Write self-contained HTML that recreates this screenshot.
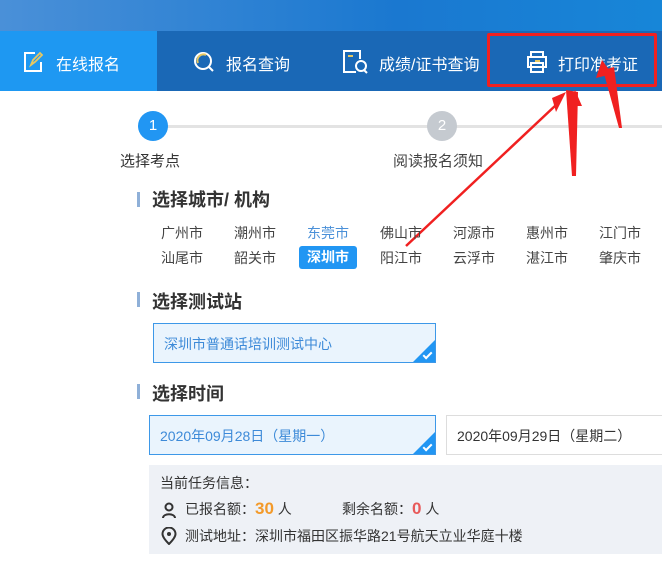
<!DOCTYPE html><html><head><meta charset="utf-8"><style>
*{margin:0;padding:0;box-sizing:border-box}
body{width:662px;height:568px;overflow:hidden;background:#fff;font-family:"Liberation Sans","Noto Sans CJK SC",sans-serif;position:relative;color:#333}
.a{position:absolute;white-space:nowrap}
.h{font-size:18px;font-weight:bold;color:#333}
.bar{position:absolute;width:3px;height:15px;background:#8fb0d8;left:137px}
.c{font-size:14px;color:#444}
.chk{position:absolute;right:0;bottom:0;width:0;height:0;border-left:22px solid transparent;border-bottom:22px solid #2196f3}
</style></head><body>
<div class="a" style="left:0;top:0;width:662px;height:31px;background:linear-gradient(90deg,#4a90d8,#1a78d0 60%,#1786d8)"></div>
<div class="a" style="left:0;top:31px;width:662px;height:60px;background:#1a68b6"></div>
<div class="a" style="left:0;top:31px;width:157px;height:60px;background:#1e98f2"></div>
<svg class="a" style="left:22px;top:50px" width="24" height="24" viewBox="0 0 24 24"><path d="M13 3H3v18h16v-9" fill="none" stroke="#fff" stroke-width="2"/><path d="M9 15l2-5 7-7 2 2-7 7z" fill="none" stroke="#e8c860" stroke-width="1.8"/></svg>
<div class="a" style="left:56px;top:51px;font-size:16px;color:#fff">在线报名</div>
<svg class="a" style="left:192px;top:50px" width="24" height="24" viewBox="0 0 24 24"><circle cx="11" cy="11" r="8" fill="none" stroke="#fff" stroke-width="2"/><path d="M6 13a6 6 0 0 1 8-8" fill="none" stroke="#e8c860" stroke-width="2"/><path d="M17 17l4 4" stroke="#fff" stroke-width="2"/></svg>
<div class="a" style="left:226px;top:51px;font-size:16px;color:#fff">报名查询</div>
<svg class="a" style="left:342px;top:49px" width="28" height="26" viewBox="0 0 28 26"><path d="M14 23H2V2h16v8" fill="none" stroke="#fff" stroke-width="2"/><path d="M6 7h5" stroke="#e8c860" stroke-width="2"/><circle cx="19" cy="17" r="5" fill="none" stroke="#fff" stroke-width="2"/><path d="M22 21l3 3" stroke="#fff" stroke-width="2"/></svg>
<div class="a" style="left:379px;top:51px;font-size:16px;color:#fff">成绩/证书查询</div>
<svg class="a" style="left:525px;top:50px" width="24" height="24" viewBox="0 0 24 24"><path d="M6 7V2h12v5M3 7h18v10H3z M6 13h12v9H6z" fill="none" stroke="#fff" stroke-width="2"/><path d="M10 11h5" stroke="#e8c860" stroke-width="2"/></svg>
<div class="a" style="left:558px;top:51px;font-size:16px;color:#fff">打印准考证</div>
<div class="a" style="left:487px;top:33px;width:170px;height:54px;border:3px solid #f02020;border-radius:2px"></div>
<div class="a" style="left:165px;top:125px;width:497px;height:3px;background:#e3e3e3"></div>
<div class="a" style="left:138px;top:111px;width:30px;height:30px;border-radius:50%;background:#2196f3;color:#fff;font-size:15px;text-align:center;line-height:30px">1</div>
<div class="a" style="left:427px;top:111px;width:30px;height:30px;border-radius:50%;background:#c5cad0;color:#fff;font-size:15px;text-align:center;line-height:30px">2</div>
<div class="a" style="left:120px;top:150px;font-size:15px;color:#333">选择考点</div>
<div class="a" style="left:393px;top:150px;font-size:15px;color:#444">阅读报名须知</div>
<svg class="a" style="left:0;top:0" width="662" height="568"><path d="M406 246L556 105" stroke="#f02020" stroke-width="2.5"/><polygon points="552,98 566,92 556,112" fill="#f02020"/><polygon points="566,90 578,92 576,176 572,176" fill="#f02020"/><polygon points="575,90 569,106 582,106" fill="#f02020"/><polygon points="603,70 614,67 622,128 619,128" fill="#f02020"/><polygon points="602,60 596,78 612,74" fill="#f02020"/></svg>
<div class="bar" style="top:192px"></div><div class="a h" style="left:152px;top:186px">选择城市/ 机构</div>
<div class="a c" style="left:161px;top:223px">广州市</div><div class="a c" style="left:234px;top:223px">潮州市</div><div class="a c" style="left:307px;top:223px;color:#4a90d8">东莞市</div><div class="a c" style="left:380px;top:223px">佛山市</div><div class="a c" style="left:453px;top:223px">河源市</div><div class="a c" style="left:526px;top:223px">惠州市</div><div class="a c" style="left:599px;top:223px">江门市</div>
<div class="a c" style="left:161px;top:248px">汕尾市</div><div class="a c" style="left:234px;top:248px">韶关市</div><div class="a" style="left:299px;top:246px;width:58px;height:23px;background:#2196f3;border-radius:3px;color:#fff;font-size:14px;font-weight:bold;text-align:center;line-height:23px">深圳市</div><div class="a c" style="left:380px;top:248px">阳江市</div><div class="a c" style="left:453px;top:248px">云浮市</div><div class="a c" style="left:526px;top:248px">湛江市</div><div class="a c" style="left:599px;top:248px">肇庆市</div>
<div class="bar" style="top:292px"></div><div class="a h" style="left:152px;top:288px">选择测试站</div>
<div class="a" style="left:153px;top:323px;width:283px;height:40px;border:1px solid #3d98e8;background:#eaf4fd;overflow:hidden"><div class="a" style="left:10px;top:10px;font-size:14px;color:#3d8ad8">深圳市普通话培训测试中心</div><div class="chk"></div><div class="a" style="right:3px;bottom:5px;width:9px;height:5px;border-left:2px solid #fff;border-bottom:2px solid #fff;transform:rotate(-45deg)"></div></div>
<div class="bar" style="top:384px"></div><div class="a h" style="left:152px;top:380px">选择时间</div>
<div class="a" style="left:149px;top:415px;width:287px;height:40px;border:1px solid #3d98e8;background:#eaf4fd;overflow:hidden"><div class="a" style="left:10px;top:10px;font-size:14px;color:#3d8ad8">2020年09月28日（星期一）</div><div class="chk"></div><div class="a" style="right:3px;bottom:5px;width:9px;height:5px;border-left:2px solid #fff;border-bottom:2px solid #fff;transform:rotate(-45deg)"></div></div>
<div class="a" style="left:446px;top:415px;width:230px;height:40px;border:1px solid #ddd;background:#fff"><div class="a" style="left:10px;top:10px;font-size:14px;color:#333">2020年09月29日（星期二）</div></div>
<div class="a" style="left:149px;top:465px;width:520px;height:89px;background:#eef1f6"></div>
<div class="a" style="left:160px;top:473px;font-size:14px;color:#333">当前任务信息：</div>
<svg class="a" style="left:162px;top:502px" width="14" height="16" viewBox="0 0 14 16"><circle cx="7" cy="5" r="3.5" fill="none" stroke="#333" stroke-width="2"/><path d="M1 16c0-5 12-5 12 0" fill="none" stroke="#333" stroke-width="2"/></svg>
<div class="a" style="left:185px;top:499px;font-size:14px;color:#333">已报名额：<b style="color:#f39a2a;font-size:17px">30</b> 人</div>
<div class="a" style="left:342px;top:499px;font-size:14px;color:#333">剩余名额：<b style="color:#e85a5a;font-size:17px">0</b> 人</div>
<svg class="a" style="left:161px;top:527px" width="16" height="18" viewBox="0 0 16 18"><path d="M8 17C3 12 1.5 9 1.5 7a6.5 6.5 0 0 1 13 0c0 2-1.5 5-6.5 10z" fill="none" stroke="#333" stroke-width="2"/><circle cx="8" cy="7" r="2" fill="#333"/></svg>
<div class="a" style="left:185px;top:526px;font-size:14px;color:#333">测试地址：深圳市福田区振华路21号航天立业华庭十楼</div>
</body></html>
